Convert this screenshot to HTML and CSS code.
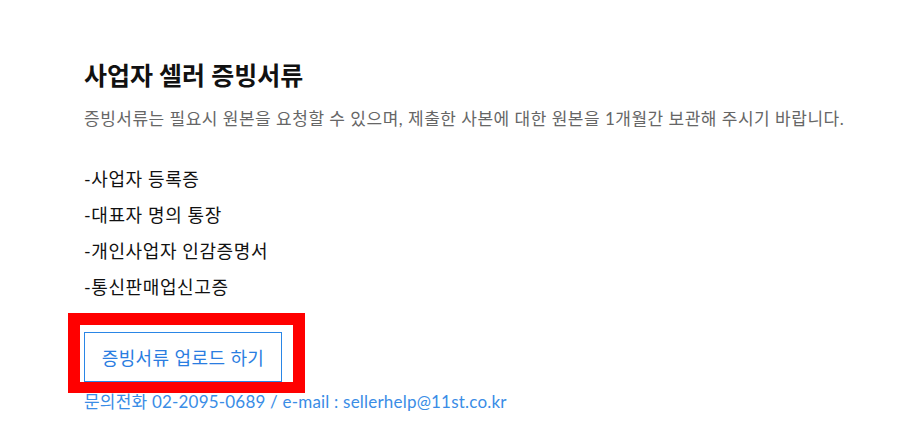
FILE: index.html
```html
<!DOCTYPE html>
<html lang="ko">
<head>
    <meta charset="utf-8">
    <title>사업자 셀러 증빙서류</title>
    <link rel="stylesheet" href="styles.css">
</head>
<body>

<div class="container">
    <h1>사업자 셀러 증빙서류</h1>
    <p class="desc">증빙서류는 필요시 원본을 요청할 수 있으며, 제출한 사본에 대한 원본을 1개월간 보관해 주시기 바랍니다.</p>
    <ul class="doc-list">
        <li>-사업자 등록증</li>
        <li>-대표자 명의 통장</li>
        <li>-개인사업자 인감증명서</li>
        <li>-통신판매업신고증</li>
    </ul>
    <div class="upload-wrap">
        <button class="upload-btn">증빙서류 업로드 하기</button>
        <span class="highlight"></span>
    </div>
    <p class="contact">문의전화 02-2095-0689 / e-mail : sellerhelp@11st.co.kr</p>
</div>

</body>
</html>
```

FILE: styles.css
```css
body {
    margin: 0;
    background: #fff;
    font-family: Lato, "Noto Sans CJK KR", sans-serif;
}

.container {
    padding: 57px 0 0 84px;
}

.container h1 {
    margin: 0;
    font-size: 25px;
    line-height: 36px;
    font-weight: bold;
    color: #111;
}

.desc {
    margin: 14px 0 0;
    font-size: 17px;
    line-height: 24px;
    letter-spacing: 0.5px;
    color: #666;
}

.doc-list {
    list-style: none;
    margin: 30px 0 0;
    padding: 0;
}

.doc-list li {
    font-size: 18px;
    line-height: 36px;
    letter-spacing: 0.6px;
    color: #111;
}

.upload-wrap {
    position: relative;
    margin-top: 27px;
    width: 198px;
}

.upload-btn {
    display: block;
    width: 198px;
    height: 50px;
    background: #fff;
    border: 1px solid #2a86e6;
    color: #2a7de1;
    font-family: Lato, "Noto Sans CJK KR", sans-serif;
    font-size: 18px;
    letter-spacing: 0.4px;
    padding: 0;
    cursor: pointer;
}

.highlight {
    position: absolute;
    left: -16px;
    top: -19px;
    width: 213px;
    height: 57px;
    border: 12px solid #f00;
    border-bottom-width: 11px;
    pointer-events: none;
}

.contact {
    margin: 10px 0 0;
    font-size: 17px;
    line-height: 20px;
    letter-spacing: 0.2px;
    color: #3a8de6;
}
```
